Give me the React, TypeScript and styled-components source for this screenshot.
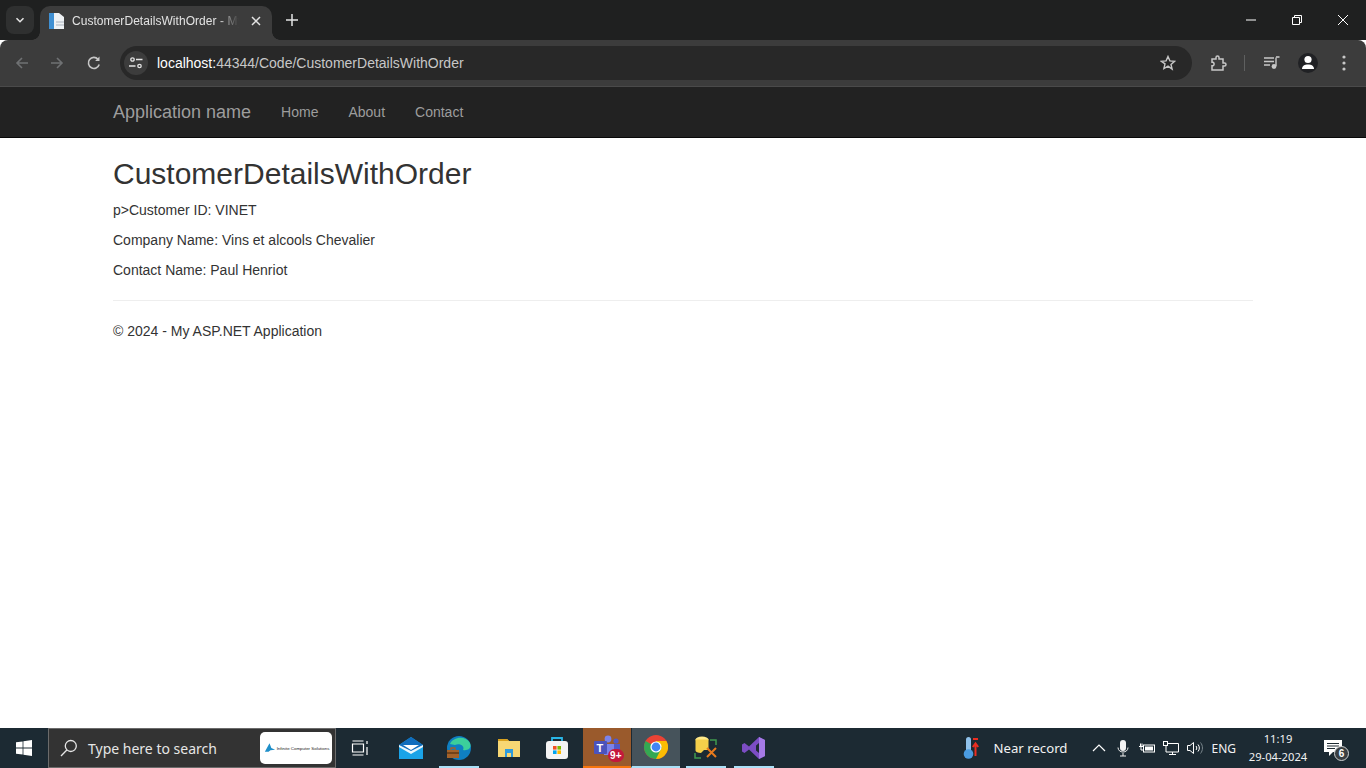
import React from 'react';
import styled, {createGlobalStyle} from 'styled-components';

const GlobalStyle = createGlobalStyle`
  html, body { margin: 0; padding: 0; height: 100%; background: #fff; }
  body { font-family: "Liberation Sans", Arial, sans-serif; overflow: hidden; }
`;

const App: React.FC = () => (
  <Screen>
    <GlobalStyle />
    <TabStrip>
      <TabSearch>
        <svg width="12" height="12" viewBox="0 0 12 12"><path d="M2.5 4.2 6 7.7l3.5-3.5" fill="none" stroke="#e3e3e3" strokeWidth="1.6" /></svg>
      </TabSearch>
      <Tab>
        <svg width="17" height="18" viewBox="0 0 17 18">
          <path d="M1 1h10l5 4v12H1z" fill="#eef1f4" />
          <path d="M1 1h5v16H1z" fill="#3f8fd2" />
          <path d="M8 10h8M8 13h8" stroke="#a9b4bd" strokeWidth="1.2" />
        </svg>
        <TabTitle>CustomerDetailsWithOrder - My ASP.NET Application</TabTitle>
        <svg width="10" height="10" viewBox="0 0 10 10"><path d="M1 1l8 8M9 1 1 9" stroke="#e3e3e3" strokeWidth="1.5" /></svg>
      </Tab>
      <NewTab>
        <svg width="12" height="12" viewBox="0 0 12 12"><path d="M6 0v12M0 6h12" stroke="#e3e3e3" strokeWidth="1.5" /></svg>
      </NewTab>
      <WindowButtons>
        <WindowButton>
          <svg width="10" height="10" viewBox="0 0 10 10"><path d="M0 5h10" stroke="#fff" /></svg>
        </WindowButton>
        <WindowButton>
          <svg width="10" height="10" viewBox="0 0 10 10"><path d="M.5 2.5h7v7h-7zM2.5 2.5v-2h7v7h-2" fill="none" stroke="#fff" /></svg>
        </WindowButton>
        <WindowButton>
          <svg width="10" height="10" viewBox="0 0 10 10"><path d="M0 0l10 10M10 0 0 10" stroke="#fff" /></svg>
        </WindowButton>
      </WindowButtons>
    </TabStrip>
    <Toolbar>
      <NavIcon>
        <svg width="16" height="16" viewBox="0 0 16 16"><path d="M14 8H3M8 3 3 8l5 5" fill="none" stroke="#6f7173" strokeWidth="1.6" /></svg>
      </NavIcon>
      <NavIcon>
        <svg width="16" height="16" viewBox="0 0 16 16"><path d="M2 8h11M8 3l5 5-5 5" fill="none" stroke="#6f7173" strokeWidth="1.6" /></svg>
      </NavIcon>
      <ReloadIcon>
        <svg width="16" height="16" viewBox="0 0 16 16">
          <path d="M13.2 9.5A5.5 5.5 0 1 1 12 4.2" fill="none" stroke="#c7c7c7" strokeWidth="1.6" />
          <path d="M13.5 1.5v4.4H9.1z" fill="#c7c7c7" />
        </svg>
      </ReloadIcon>
      <Omnibox>
        <SiteInfo>
          <svg width="14" height="12" viewBox="0 0 14 12" fill="none" stroke="#e3e3e3" strokeWidth="1.3">
            <circle cx="3.5" cy="2.5" r="1.7" />
            <path d="M7 2.5h6.5M0 9h6.5" />
            <circle cx="10.5" cy="9" r="1.7" />
          </svg>
        </SiteInfo>
        <Url>
          <UrlHost>localhost:</UrlHost>44344/Code/CustomerDetailsWithOrder
        </Url>
        <svg width="16" height="16" viewBox="0 0 16 16">
          <path d="M8 1.5l1.9 4.4 4.7.4-3.6 3.1 1.1 4.7L8 11.1l-4.1 2.5L5 8.9 1.4 6.3l4.7-.4z" fill="none" stroke="#c7c7c7" strokeWidth="1.4" />
        </svg>
      </Omnibox>
      <ToolIcons>
        <svg width="18" height="18" viewBox="0 0 18 18">
          <path d="M2 5h4V3.5a1.5 1.5 0 0 1 3 0V5h4v4h1.5a1.5 1.5 0 0 1 0 3H13v4H2v-4.2h1a2 2 0 0 0 0-3.6H2z" transform="translate(1 0)" fill="none" stroke="#c7c7c7" strokeWidth="1.5" />
        </svg>
        <ToolDivider />
        <svg width="16" height="14" viewBox="0 0 16 14">
          <path d="M0 2h10M0 5.5h10M0 9h6" stroke="#c7c7c7" strokeWidth="1.4" />
          <path d="M12 1.5V10" stroke="#c7c7c7" strokeWidth="1.4" />
          <path d="M12 1h3.5" stroke="#c7c7c7" strokeWidth="1.6" />
          <circle cx="10" cy="10.5" r="2.4" fill="#c7c7c7" />
        </svg>
        <Avatar>
          <svg width="20" height="20" viewBox="0 0 20 20">
            <circle cx="10" cy="6.5" r="3.6" fill="#fff" />
            <path d="M4 16c0-3.2 2.6-4.6 6-4.6s6 1.4 6 4.6z" fill="#fff" />
          </svg>
        </Avatar>
        <Kebab>
          <svg width="4" height="16" viewBox="0 0 4 16" fill="#c7c7c7">
            <circle cx="2" cy="2" r="1.6" />
            <circle cx="2" cy="8" r="1.6" />
            <circle cx="2" cy="14" r="1.6" />
          </svg>
        </Kebab>
      </ToolIcons>
    </Toolbar>
    <Navbar>
      <Container>
        <NavRow>
          <Brand>Application name</Brand>
          <NavLink>Home</NavLink>
          <NavLink>About</NavLink>
          <NavLink>Contact</NavLink>
        </NavRow>
      </Container>
    </Navbar>
    <Page>
      <Container>
        <Heading>CustomerDetailsWithOrder</Heading>
        <Para>p&gt;Customer ID: VINET</Para>
        <Para>Company Name: Vins et alcools Chevalier</Para>
        <Para>Contact Name: Paul Henriot</Para>
        <Rule />
        <Para>© 2024 - My ASP.NET Application</Para>
      </Container>
    </Page>
    <Taskbar>
      <StartButton>
        <svg width="16" height="16" viewBox="0 0 16 16" fill="#fff">
          <path d="M0 2.3 6.6 1.4v6.2H0zM7.400 1.300 16 0v7.600H7.400zM0 8.400h6.600v6.200L0 13.700zM7.400 8.400H16V16l-8.600-1.300z" />
        </svg>
      </StartButton>
      <SearchBox>
        <svg width="18" height="18" viewBox="0 0 18 18" fill="none" stroke="#e6e6e6" strokeWidth="1.3">
          <circle cx="10.8" cy="7" r="5.5" />
          <path d="M6.8 11 1 17" />
        </svg>
        <SearchText>Type here to search</SearchText>
        <SearchLogo>
          <svg width="13" height="10" viewBox="0 0 14 10"><path d="M2 9 7 0l2 5 4 2-5 .5L6 9z" fill="#1f8fc9" /></svg>
          <SearchLogoText>Infinite Computer Solutions</SearchLogoText>
        </SearchLogo>
      </SearchBox>
      <TaskView>
        <svg width="18" height="18" viewBox="0 0 18 18" fill="none" stroke="#fff" strokeWidth="1.2">
          <path d="M1.5 5h11v8h-11zM1.500 2h11M1.500 16h11M16 2v3M16 8v8" />
        </svg>
      </TaskView>
      <AppButton $offset={3}>
        <svg width="24" height="22" viewBox="0 0 24 22">
          <path d="M0 8 12 0l12 8v14H0z" fill="#1aa3e8" />
          <path d="M0 8h24v2l-12 7L0 10z" fill="#e8f6fd" />
          <path d="M0 8 12 0l12 8-12 6z" fill="#0f6cbd" />
          <path d="M4 8h16l-8 5z" fill="#fff" />
        </svg>
      </AppButton>
      <AppButton $running>
        <svg width="26" height="24" viewBox="0 0 26 24">
          <circle cx="13" cy="12" r="12" fill="#0f7fc2" />
          <path d="M4 8C7 1 19-1 24 7c2 5-2 8-7 7 2-4-3-7-8-5z" fill="#3ccf9b" />
          <path d="M1 14h12v8H1z" fill="#a4622a" />
          <path d="M1 17h12" stroke="#5f3512" strokeWidth="1.4" />
          <path d="M5 14v-2h4v2" fill="none" stroke="#a4622a" strokeWidth="1.4" />
        </svg>
      </AppButton>
      <AppButton $offset={2}>
        <svg width="22" height="18" viewBox="0 0 22 18">
          <path d="M0 0h9l2 2h11v16H0z" fill="#f7d774" />
          <path d="M0 0h9l2 2H0z" fill="#d9a21f" />
          <path d="M7 10h8v8h-2v-4H9v4H7z" fill="#2f9bdc" />
        </svg>
      </AppButton>
      <AppButton>
        <svg width="24" height="24" viewBox="0 0 24 24">
          <path d="M7 6V2h10v4" fill="none" stroke="#29b6e8" strokeWidth="1.8" />
          <rect x="1" y="5" width="22" height="18" rx="3" fill="#f4f4f4" />
          <path d="M8 10h3.600v3.600H8z" fill="#f25022" />
          <path d="M12.400 10H16v3.600h-3.600z" fill="#7fba00" />
          <path d="M8 14.400h3.600V18H8z" fill="#00a4ef" />
          <path d="M12.400 14.400H16V18h-3.600z" fill="#ffb900" />
        </svg>
      </AppButton>
      <TeamsButton $offset={2}>
        <TeamsIcon>
          <svg width="27" height="24" viewBox="0 0 27 24">
            <circle cx="14" cy="4" r="3.400" fill="#7b83eb" />
            <circle cx="22" cy="6" r="2.600" fill="#5059c9" />
            <path d="M10 9h10v11H10z" fill="#7b83eb" />
            <path d="M20 9h6v8h-6z" fill="#5059c9" />
            <rect x="0" y="6" width="13" height="13" rx="1" fill="#4b53bc" />
          </svg>
          <TeamsLetter>T</TeamsLetter>
          <TeamsBadge>9+</TeamsBadge>
        </TeamsIcon>
      </TeamsButton>
      <ChromeButton>
        <svg width="24" height="24" viewBox="0 0 24 24">
          <circle cx="12" cy="12" r="12" fill="#ea4335" />
          <path d="M12 12 1.600 6a12 12 0 0 0 4.400 16.400L12 24z" fill="#34a853" />
          <path d="M12 24a12 12 0 0 0 10.400-18H12z" fill="#fbbc04" />
          <path d="M12 24 6 22.400 12 12l6 0z" fill="#34a853" />
          <circle cx="12" cy="12" r="5.600" fill="#fff" />
          <circle cx="12" cy="12" r="4.400" fill="#4285f4" />
        </svg>
      </ChromeButton>
      <AppButton $running $width={52}>
        <svg width="24" height="24" viewBox="0 0 24 24" fill="none">
          <path d="M16 4h6v5M1 17v5h6" stroke="#3f9b4f" strokeWidth="1.500" />
          <ellipse cx="8" cy="3.500" rx="6.500" ry="3" fill="#ffe98a" />
          <path d="M1.500 3.500h13V14H10l-3 3c-3 0-5.500-1-5.500-2.500z" fill="#f4cf4a" />
          <path d="M13 12l9 9M22 12l-9 9" stroke="#e87a1d" strokeWidth="2" />
        </svg>
      </AppButton>
      <AppButton $running $width={44}>
        <svg width="24" height="24" viewBox="0 0 24 24">
          <path d="M17 1l6 3v16l-6 3-10-9.500L2.500 17 0 15.500v-7L2.500 7 7 10.500z" fill="#7c4dc4" />
          <path d="M17 1l6 3v16l-6 3z" fill="#a57ae6" />
          <path d="M17 7v10l-3-2.600V9.600z" fill="#1e2b33" />
        </svg>
      </AppButton>
      <Tray>
        <Weather>
          <svg width="16" height="24" viewBox="0 0 16 24">
            <rect x="3" y="1" width="5" height="16" rx="2.500" fill="#8fc1ea" />
            <circle cx="5.500" cy="18" r="4.800" fill="#4a9be0" />
            <path d="M10 3h5" stroke="#ec2d20" strokeWidth="2" />
            <path d="M12.500 20V8M9.800 11l2.700-3.500 2.700 3.500" fill="none" stroke="#ec2d20" strokeWidth="2" />
          </svg>
          Near record
        </Weather>
        <TrayIcons>
          <TrayIcon>
            <svg width="14" height="8" viewBox="0 0 14 8"><path d="M1 7l6-6 6 6" fill="none" stroke="#fff" strokeWidth="1.2" /></svg>
          </TrayIcon>
          <TrayIcon>
            <svg width="12" height="17" viewBox="0 0 12 17" fill="none">
              <rect x="3" y="0" width="6" height="11" rx="3" fill="#f2f2f2" />
              <path d="M1 7.500c0 6 10 6 10 0M6 13v3M3 16h6" stroke="#f2f2f2" />
            </svg>
          </TrayIcon>
          <TrayIcon>
            <svg width="16" height="12" viewBox="0 0 16 12" fill="none" stroke="#fff">
              <rect x="4.500" y="3" width="11" height="7" />
              <rect x="6" y="4.500" width="8" height="4" fill="#fff" stroke="none" />
              <path d="M0 4.500h4M1.500 1.500v3M3 1.500v3M2 5v3h3" />
            </svg>
          </TrayIcon>
          <TrayIcon>
            <svg width="16" height="14" viewBox="0 0 16 14" fill="none" stroke="#fff">
              <path d="M3 2.500h12.500v8.500H3zM6 13.500h7M9.500 11v2.500" />
              <rect x=".5" y=".5" width="4" height="4" fill="#1e2b33" />
            </svg>
          </TrayIcon>
          <TrayIcon>
            <svg width="16" height="14" viewBox="0 0 16 14" fill="none" stroke="#fff">
              <path d="M.5 4.500h2.500L6.500 1.500v11L3 9.500H.5z" />
              <path d="M9 5c1 1.200 1 2.800 0 4M11 3.500c1.800 2 1.800 5 0 7" />
              <path d="M13.500 1.500c2.600 3 2.600 8 0 11" stroke="#7a868c" />
            </svg>
          </TrayIcon>
        </TrayIcons>
        <Lang>ENG</Lang>
        <Clock>
          <span>11:19</span>
          <span>29-04-2024</span>
        </Clock>
        <Notify>
          <svg width="18" height="16" viewBox="0 0 18 16">
            <path d="M0 0h18v12H9l-4 4v-4H0z" fill="#fff" />
            <path d="M3 3.500h12M3 6h12M3 8.500h8" stroke="#1e2b33" />
          </svg>
          <NotifyBadge>6</NotifyBadge>
        </Notify>
      </Tray>
    </Taskbar>
  </Screen>
);

const Screen = styled.div`
  display: flex;
  flex-direction: column;
  height: 768px;
  width: 1366px;
  overflow: hidden;
`;

const TabStrip = styled.div`
  display: flex;
  align-items: flex-start;
  height: 40px;
  background: #1f2020;
  padding-left: 6px;
`;

const TabSearch = styled.div`
  display: flex;
  align-items: center;
  justify-content: center;
  width: 28px;
  height: 28px;
  margin-top: 6px;
  background: #2f3030;
  border-radius: 8px;
`;

const Tab = styled.div`
  position: relative;
  display: flex;
  align-items: center;
  gap: 7px;
  width: 232px;
  height: 34px;
  margin: 6px 0 0 6px;
  padding: 0 11px 4px 8px;
  box-sizing: border-box;
  background: #3c3c3c;
  border-radius: 10px 10px 0 0;

  &::before,
  &::after {
    content: '';
    position: absolute;
    bottom: 0;
    width: 8px;
    height: 8px;
  }
  &::before {
    left: -8px;
    background: radial-gradient(circle at 0 0, #1f2020 7.5px, #3c3c3c 8px);
  }
  &::after {
    right: -8px;
    background: radial-gradient(circle at 100% 0, #1f2020 7.5px, #3c3c3c 8px);
  }
`;

const TabTitle = styled.span`
  flex: 1;
  overflow: hidden;
  white-space: nowrap;
  font-size: 12px;
  letter-spacing: 0.05px;
  color: #e3e3e3;
  mask-image: linear-gradient(to right, #000 85%, transparent 97%);
`;

const NewTab = styled.div`
  display: flex;
  align-items: center;
  justify-content: center;
  width: 28px;
  height: 28px;
  margin: 6px 0 0 6px;
`;

const WindowButtons = styled.div`
  display: flex;
  margin-left: auto;
`;

const WindowButton = styled.div`
  display: flex;
  align-items: center;
  justify-content: center;
  width: 46px;
  height: 40px;
`;

const Toolbar = styled.div`
  display: flex;
  align-items: center;
  height: 47px;
  background: #3c3c3c;
  border-bottom: 1px solid #4a4a4a;
  border-radius: 8px 8px 0 0;
  padding: 0 12px 0 4px;
  box-sizing: border-box;
`;

const NavIcon = styled.div`
  display: flex;
  align-items: center;
  justify-content: center;
  width: 35px;
  height: 34px;
`;

const ReloadIcon = styled(NavIcon)`
  margin-left: 2px;
`;

const Omnibox = styled.div`
  display: flex;
  align-items: center;
  flex: 1;
  height: 34px;
  margin: 0 10px 0 9px;
  padding: 0 16px 0 4px;
  background: #282828;
  border-radius: 17px;
`;

const SiteInfo = styled.div`
  display: flex;
  align-items: center;
  justify-content: center;
  width: 24px;
  height: 24px;
  background: #3c3c3c;
  border-radius: 50%;
`;

const Url = styled.div`
  flex: 1;
  margin-left: 9px;
  font-size: 14px;
  color: #c7c7c7;
`;

const UrlHost = styled.span`
  color: #fff;
`;

const ToolIcons = styled.div`
  display: flex;
  align-items: center;
  width: 164px;
  margin-right: -12px;
  padding-left: 7px;
  box-sizing: border-box;
`;

const ToolDivider = styled.div`
  width: 1px;
  height: 16px;
  margin: 0 19px 0 17px;
  background: #5f6060;
`;

const Avatar = styled.div`
  display: flex;
  align-items: center;
  justify-content: center;
  width: 20px;
  height: 20px;
  margin-left: 18px;
  background: #202124;
  border-radius: 50%;
`;

const Kebab = styled.div`
  display: flex;
  margin-left: 24px;
`;

const Navbar = styled.nav`
  height: 51px;
  box-sizing: border-box;
  background: #222;
  border-bottom: 1px solid #080808;
`;

const Container = styled.div`
  width: 1140px;
  margin: 0 auto;
`;

const NavRow = styled.div`
  display: flex;
  align-items: center;
  height: 49px;
`;

const Brand = styled.a`
  padding-top: 2px;
  font-size: 18px;
  color: #9d9d9d;
  margin-right: 15px;
`;

const NavLink = styled.a`
  font-size: 14px;
  color: #9d9d9d;
  padding: 0 15px;
`;

const Page = styled.main`
  flex: 1;
  background: #fff;
  color: #333;
  font-size: 14px;
  line-height: 20px;
`;

const Heading = styled.h2`
  margin: 19px 0 10px;
  font-size: 30px;
  font-weight: 500;
  line-height: 33px;
`;

const Para = styled.p`
  margin: 0 0 10px;
`;

const Rule = styled.hr`
  border: 0;
  border-top: 1px solid #eee;
  margin: 20px 0;
`;

const Taskbar = styled.footer`
  display: flex;
  align-items: stretch;
  height: 40px;
  background: #1c2a33;
  color: #fff;
`;

const StartButton = styled.div`
  display: flex;
  align-items: center;
  justify-content: center;
  width: 48px;
`;

const SearchBox = styled.div`
  display: flex;
  align-items: center;
  width: 288px;
  box-sizing: border-box;
  padding: 0 3px 0 11px;
  background: #333;
  border: 1px solid #6b6b6b;
`;

const SearchText = styled.span`
  flex: 1;
  margin-left: 10px;
  font-size: 14px;
  color: #e6e6e6;
  font-family: "Noto Sans", sans-serif;
`;

const SearchLogo = styled.div`
  display: flex;
  align-items: center;
  justify-content: center;
  gap: 1px;
  width: 72px;
  height: 32px;
  background: #fff;
  border-radius: 5px;
`;

const SearchLogoText = styled.span`
  font-size: 4.4px;
  white-space: nowrap;
  color: #222;
`;

const TaskView = styled.div`
  display: flex;
  align-items: center;
  justify-content: center;
  width: 48px;
`;

const AppButton = styled.div<{$running?: boolean; $width?: number; $offset?: number}>`
  position: relative;
  display: flex;
  align-items: center;
  justify-content: center;
  width: ${(props) => props.$width ?? 48}px;
  box-sizing: border-box;
  margin-left: ${(props) => props.$offset ?? 0}px;
  ${(props) =>
    props.$running &&
    `&::after {
      content: '';
      position: absolute;
      left: 50%;
      width: 40px;
      margin-left: -20px;
      bottom: 0;
      height: 2px;
      background: #a9e0f7;
    }`}
`;

const TeamsButton = styled(AppButton)`
  background: #9a5a2c;
  border-bottom: 2px solid #f7750d;
`;

const ChromeButton = styled(AppButton)`
  background: #46535b;
  border-bottom: 2px solid #a9e0f7;
  border-left: 1px solid #1c2a33;
  width: 49px;
`;

const TeamsIcon = styled.div`
  position: relative;
  width: 27px;
  height: 24px;
`;

const TeamsLetter = styled.span`
  position: absolute;
  left: 3px;
  top: 7px;
  font-size: 11px;
  font-weight: 700;
  color: #fff;
`;

const TeamsBadge = styled.span`
  position: absolute;
  right: -3px;
  bottom: -3px;
  padding: 1px 2px;
  font-size: 10px;
  font-weight: 700;
  line-height: 11px;
  color: #fff;
  background: #c4183c;
  border-radius: 7px;
`;

const Tray = styled.div`
  display: flex;
  align-items: center;
  margin-left: auto;
`;

const Weather = styled.div`
  display: flex;
  align-items: center;
  gap: 15px;
  font-family: "Noto Sans", sans-serif;
  font-size: 13.2px;
  color: #f2f2f2;
`;

const TrayIcons = styled.div`
  display: flex;
  align-items: center;
  margin-left: 20px;
`;

const TrayIcon = styled.div`
  display: flex;
  align-items: center;
  justify-content: center;
  width: 24px;
`;

const Lang = styled.span`
  margin-left: 4px;
  font-family: "Noto Sans", sans-serif;
  font-size: 12px;
  color: #f2f2f2;
`;

const Clock = styled.div`
  display: flex;
  flex-direction: column;
  align-items: center;
  gap: 2px;
  width: 60px;
  margin-left: 12px;
  white-space: nowrap;
  font-family: "Noto Sans", sans-serif;
  font-size: 11.2px;
  line-height: 16px;
  color: #f2f2f2;
`;

const Notify = styled.div`
  position: relative;
  display: flex;
  align-items: center;
  justify-content: center;
  width: 32px;
  margin: 0 17px 0 9px;
`;

const NotifyBadge = styled.span`
  position: absolute;
  right: 0;
  top: 6px;
  width: 15px;
  height: 15px;
  text-align: center;
  font-size: 10px;
  font-weight: 700;
  background: #3a3f42;
  border: 1px solid #cfd2d4;
  border-radius: 50%;
  box-sizing: border-box;
  line-height: 13px;
`;

export default App;
